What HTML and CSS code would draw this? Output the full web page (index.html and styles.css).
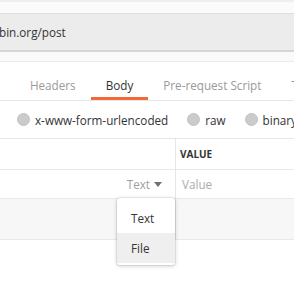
FILE: index.html
```html
<!DOCTYPE html>
<html>
<head>
<meta charset="utf-8">
<link rel="stylesheet" href="styles.css">
</head>
<body>
<div class="page">
  <div class="topstrip"></div>
  <div class="urlbar"><span class="url">bin.org/post</span></div>
  <div class="subgap"></div>
  <nav class="tabs">
    <div class="tab tab-first">Authorization</div>
    <div class="tab">Headers</div>
    <div class="tab active">Body</div>
    <div class="tab">Pre-request Script</div>
    <div class="tab">Tests</div>
  </nav>
  <div class="radios">
    <label class="radio"><span class="dot"></span>x-www-form-urlencoded</label>
    <label class="radio"><span class="dot"></span>raw</label>
    <label class="radio"><span class="dot"></span>binary</label>
  </div>
  <div class="table">
    <div class="row head">
      <div class="cell key"></div>
      <div class="cell val">VALUE</div>
    </div>
    <div class="row">
      <div class="cell key type">Text <span class="caret"></span></div>
      <div class="cell val placeholder">Value</div>
    </div>
    <div class="row empty">
      <div class="cell key"></div>
      <div class="cell val"></div>
    </div>
  </div>
  <div class="menu">
    <div class="item">Text</div>
    <div class="item hover">File</div>
  </div>
</div>
</body>
</html>
```

FILE: styles.css
```css
html, body {
  margin: 0;
  padding: 0;
  background: #ffffff;
}
body {
  font-family: "Open Sans", "DejaVu Sans", sans-serif;
  font-size: 11.7px;
  color: #333;
}
.page {
  position: relative;
  width: 294px;
  height: 294px;
  overflow: hidden;
  background: #fff;
}
.topstrip {
  height: 11px;
  border-top: 2px solid #efefef;
  background: #fbfbfb;
}
.urlbar {
  height: 36px;
  line-height: 36px;
  background: #ececec;
  border-top: 1px solid #dedede;
  border-bottom: 2px solid #d6d6d6;
  white-space: nowrap;
}
.url {
  margin-left: -1px;
  color: #333;
}
.subgap {
  height: 9px;
  background: #fafafa;
  border-bottom: 1px solid #ececec;
}
.tabs {
  display: flex;
  white-space: nowrap;
  border-bottom: 1px solid #e6e6e6;
  margin-left: -89px;
}
.tab {
  flex: none;
  padding: 15px 15px 4px;
  line-height: 16px;
  color: #9a9a9a;
  border-bottom: 3px solid transparent;
}
.tab.active {
  color: #333;
  border-bottom-color: #f0693a;
}
.radios {
  display: flex;
  align-items: center;
  gap: 19px;
  height: 37px;
  padding-left: 17px;
  border-bottom: 1px solid #e6e6e6;
  white-space: nowrap;
}
.radio {
  display: flex;
  align-items: center;
  gap: 5px;
  color: #333;
  line-height: 16px;
}
.dot {
  width: 11px;
  height: 11px;
  border-radius: 50%;
  background: #cbcbcb;
  border: 0.5px solid #c2c2c2;
}
.table {
  display: flex;
  flex-direction: column;
}
.row {
  display: grid;
  grid-template-columns: 175px 1fr;
  border-bottom: 1px solid #e8e8e8;
  height: 28px;
}
.row.head { height: 30px; }
.row.empty { height: 40px; background: #f7f7f7; }
.cell {
  display: flex;
  align-items: center;
}
.cell.val {
  border-left: 1px solid #e6e6e6;
  padding-left: 6px;
}
.head .val {
  font-size: 10px;
  font-weight: 700;
  color: #333;
  padding-left: 4px;
}
.type {
  justify-content: flex-end;
  padding-right: 13px;
  color: #9f9f9f;
  gap: 4px;
}
.caret {
  width: 0;
  height: 0;
  border-left: 4px solid transparent;
  border-right: 4px solid transparent;
  border-top: 5px solid #707070;
}
.placeholder {
  color: #ababab;
}
.menu {
  position: absolute;
  left: 117px;
  top: 198px;
  width: 58px;
  padding: 5px 0 2px;
  background: #fff;
  border-radius: 3px;
  box-shadow: 0 0 0 1px rgba(0,0,0,0.06), 0 1px 4px rgba(0,0,0,0.2);
}
.item {
  height: 30px;
  line-height: 30px;
  padding-left: 14px;
  color: #333;
}
.item.hover {
  background: #efefef;
}
```
